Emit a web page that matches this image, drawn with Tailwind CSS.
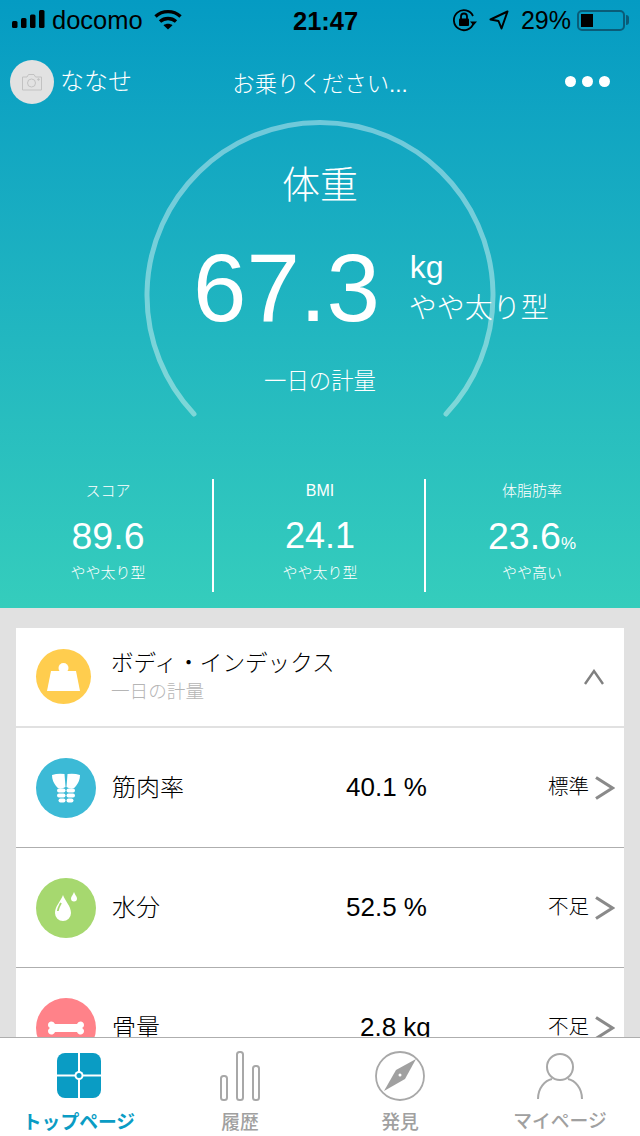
<!DOCTYPE html>
<html lang="ja">
<head>
  <meta charset="utf-8" />
  <meta name="viewport" content="width=device-width, initial-scale=1" />
  <title>体重</title>
  <script src="https://cdn.jsdelivr.net/npm/@tailwindcss/browser@4"></script>
</head>
<body class="font-['Liberation_Sans','Noto_Sans_CJK_JP',sans-serif]">
  <div class="relative w-[640px] h-[1136px] overflow-hidden bg-[#e1e1e1]">

    <!-- Hero -->
    <section class="h-[608px] bg-gradient-to-b from-[#049bc3] to-[#35cdbc] text-white">
      <!-- Status bar -->
      <div class="relative h-10 flex items-center justify-between text-black">
        <div class="flex items-center pl-3 gap-[8px]">
          <svg width="33" height="20" viewBox="0 0 33 20" fill="#000">
            <rect x="0" y="11" width="5.5" height="7" rx="1.5"/>
            <rect x="9" y="8" width="5.5" height="10" rx="1.5"/>
            <rect x="18" y="4.5" width="5.5" height="13.5" rx="1.5"/>
            <rect x="27" y="0" width="5.5" height="18" rx="1.5"/>
          </svg>
          <span class="text-[25.5px] leading-none -ml-[1px] mt-[1px]">docomo</span>
          <svg class="ml-[3px]" width="28" height="22" viewBox="0 0 28 22" fill="none" stroke="#000" stroke-width="3.4">
            <path d="M1.500 7.500C8.500 1 19.500 1 26.500 7.500"/>
            <path d="M6 12.500C10.500 8.500 17.500 8.500 22 12.500"/>
            <path d="M14 20.500L9.500 16.300C12 14.300 16 14.300 18.500 16.300Z" fill="#000" stroke="none"/>
          </svg>
        </div>
        <span class="absolute left-[293px] top-[7px] text-[25.5px] leading-[28px] font-bold">21:47</span>
        <div class="flex items-center pr-[11px]">
          <svg width="26" height="24" viewBox="0 0 26 24" fill="none" stroke="#000" stroke-width="1.800">
            <path d="M21 8A10 10 0 1 0 21.500 15"/>
            <path d="M18 13.500h7l-3.500 4z" fill="#000" stroke="none"/>
            <rect x="7" y="10.500" width="10" height="7.500" rx="1" fill="#000" stroke="none"/>
            <path d="M9 11V8.500a3 3 0 0 1 6 0V11"/>
          </svg>
          <svg class="ml-[11px]" width="20" height="22" viewBox="0 0 20 22" fill="none" stroke="#000" stroke-width="2" stroke-linejoin="round">
            <path d="M18.500 2.500L1.500 10.500L9.500 12L12.500 19.500Z"/>
          </svg>
          <span class="ml-[12px] text-[25px] leading-none">29%</span>
          <div class="ml-[6px] w-[48px] h-[21px] rounded-[5px] border-2 border-[#0a5c78] p-[2px] mr-[1px]">
            <div class="w-[12px] h-full bg-black"></div>
          </div>
          <div class="w-[3px] h-[10px] bg-[#0a5c78] rounded-r-[3px]"></div>
        </div>
      </div>

      <!-- Header -->
      <div class="relative h-[84px] pt-[20px] flex items-start justify-between pl-[10px] pr-[30px]">
        <div class="flex items-center gap-[6px]">
          <div class="w-11 h-11 rounded-full bg-[#e2e2e2] flex items-center justify-center">
            <svg width="22" height="18" viewBox="0 0 22 18" fill="none" stroke="#c2c2c2" stroke-width="1">
              <path d="M1.500 4H6L7.500 1.500H13L14.500 4H20.500V17H1.500Z"/>
              <circle cx="10.500" cy="10" r="4"/>
              <circle cx="17.500" cy="6.500" r="0.800" fill="#c2c2c2"/>
            </svg>
          </div>
          <span class="text-[24px] leading-none font-light">ななせ</span>
        </div>
        <span class="absolute left-0 right-0 top-[31px] text-center text-[22.4px] leading-[28px] font-light">お乗りください...</span>
        <div class="flex gap-[6px] mt-[16px]">
          <div class="w-[11px] h-[11px] rounded-full bg-white"></div>
          <div class="w-[11px] h-[11px] rounded-full bg-white"></div>
          <div class="w-[11px] h-[11px] rounded-full bg-white"></div>
        </div>
      </div>

      <!-- Gauge -->
      <div class="relative h-[355px]">
        <svg class="absolute left-[140px] top-[-7px]" width="360" height="310" viewBox="0 0 360 310" fill="none">
          <path d="M54 297A173 173 0 1 1 306 297" stroke="#ffffff" stroke-opacity="0.4" stroke-width="5" stroke-linecap="round"/>
        </svg>
        <div class="relative text-center pt-[38px] text-[38px] leading-[46px] font-light">体重</div>
        <div class="relative flex items-start mt-[30px] pl-[193px]">
          <span class="text-[96px] leading-[100px]">67.3</span>
          <div class="ml-[30px] mt-[12px]">
            <div class="text-[32px] leading-[34px]">kg</div>
            <div class="text-[28px] leading-[50px] font-light whitespace-nowrap -ml-[1px]">やや太り型</div>
          </div>
        </div>
        <div class="relative text-center mt-[28px] text-[22.4px] leading-[32px] font-light">一日の計量</div>
      </div>

      <!-- Stats -->
      <div class="grid grid-cols-[214px_212px_214px]">
        <div class="h-[113px] flex flex-col items-center border-r-2 border-white pl-[4px]">
          <div class="text-[15px] leading-[24px] font-light">スコア</div>
          <div class="text-[37.5px] leading-[42px] mt-[12px]">89.6</div>
          <div class="text-[15px] leading-[20px] mt-[6px] font-light">やや太り型</div>
        </div>
        <div class="h-[113px] flex flex-col items-center border-r-2 border-white pl-[2px]">
          <div class="text-[16px] leading-[24px] font-light">BMI</div>
          <div class="text-[36px] leading-[42px] mt-[12px]">24.1</div>
          <div class="text-[15px] leading-[20px] mt-[6px] font-light">やや太り型</div>
        </div>
        <div class="h-[113px] flex flex-col items-center pr-[2px]">
          <div class="text-[15px] leading-[24px] font-light">体脂肪率</div>
          <div class="text-[37.5px] leading-[42px] mt-[12px]">23.6<span class="text-[17px] leading-none">%</span></div>
          <div class="text-[15px] leading-[20px] mt-[6px] font-light">やや高い</div>
        </div>
      </div>
    </section>

    <!-- Card -->
    <section class="mx-4 mt-5 bg-white text-black">
      <div class="h-[98px] flex items-center pl-5 pr-[20px] border-b-2 border-[#e1e1e1] box-content">
        <div class="w-[55px] h-[55px] rounded-full bg-[#ffcd4e] flex items-center justify-center -mt-[1px]">
          <svg width="33" height="28" viewBox="0 0 33 28" fill="#fff">
            <circle cx="16.500" cy="5" r="5"/>
            <path d="M4 8H29L33 28H0Z"/>
          </svg>
        </div>
        <div class="ml-[20px] flex-1 mt-[1px]">
          <div class="text-[22.6px] leading-[26px] font-light">ボディ・インデックス</div>
          <div class="text-[18.6px] leading-[24px] mt-[3px] text-[#b5b5b5] font-light">一日の計量</div>
        </div>
        <svg width="20" height="16" viewBox="0 0 20 16" fill="none" stroke="#808080" stroke-width="2.400">
          <path d="M1 15L10 2L19 15"/>
        </svg>
      </div>

      <div class="h-[119px] flex items-center pl-5 border-b border-[#aeaeae] box-content">
        <div class="w-[60px] h-[60px] rounded-full bg-[#3cbad6] flex items-center justify-center">
          <svg width="30" height="30" viewBox="0 0 30 30" fill="#fff">
            <path d="M1 2Q7 0 13.500 1L14.500 14Q8 18 5 13Q1 8 1 2Z"/>
            <path d="M29 2Q23 0 16.500 1L15.500 14Q22 18 25 13Q29 8 29 2Z"/>
            <rect x="6" y="15.500" width="8.500" height="4" rx="2"/>
            <rect x="15.500" y="15.500" width="8.500" height="4" rx="2"/>
            <rect x="6" y="20.500" width="8.500" height="4" rx="2"/>
            <rect x="15.500" y="20.500" width="8.500" height="4" rx="2"/>
            <rect x="7.500" y="25.500" width="7" height="4" rx="2"/>
            <rect x="15.500" y="25.500" width="7" height="4" rx="2"/>
          </svg>
        </div>
        <span class="ml-4 w-[120px] text-[24px] font-light">筋肉率</span>
        <span class="w-[316px] pl-[114px] text-[26px] whitespace-nowrap">40.1 %</span>
        <span class="text-[20.5px] w-[47px] font-light">標準</span>
        <svg width="20" height="26" viewBox="0 0 20 26" fill="none" stroke="#8a8a8a" stroke-width="3.200">
          <path d="M1 2.500L17.500 13L1 23.500"/>
        </svg>
      </div>

      <div class="h-[119px] flex items-center pl-5 border-b border-[#aeaeae] box-content">
        <div class="w-[60px] h-[60px] rounded-full bg-[#a6d86f] flex items-center justify-center">
          <svg class="mt-[-2px]" width="24" height="30" viewBox="0 0 24 30" fill="#fff">
            <path d="M9 3C11 9 17 14 17 21A8 8 0 0 1 1 21C1 14 7 9 9 3Z"/>
            <path d="M7 11C5.500 14 4 16 3.800 19" stroke="#a6d86f" stroke-width="1.800" fill="none"/>
            <path d="M20 0C21 3 23 4.500 23 6.500A3 3 0 0 1 17 6.500C17 4.500 19 3 20 0Z"/>
          </svg>
        </div>
        <span class="ml-4 w-[120px] text-[24px] font-light">水分</span>
        <span class="w-[316px] pl-[114px] text-[26px] whitespace-nowrap">52.5 %</span>
        <span class="text-[20.5px] w-[47px] font-light">不足</span>
        <svg width="20" height="26" viewBox="0 0 20 26" fill="none" stroke="#8a8a8a" stroke-width="3.200">
          <path d="M1 2.500L17.500 13L1 23.500"/>
        </svg>
      </div>

      <div class="h-[119px] flex items-center pl-5">
        <div class="w-[60px] h-[60px] rounded-full bg-[#ff8289] flex items-center justify-center">
          <svg width="36" height="16" viewBox="0 0 36 16" fill="#fff">
            <path d="M7 4C5 0 0 1 0 5C0 6.500 1 7.500 2 8C1 8.500 0 9.500 0 11C0 15 5 16 7 12H29C31 16 36 15 36 11C36 9.500 35 8.500 34 8C35 7.500 36 6.500 36 5C36 1 31 0 29 4Z"/>
          </svg>
        </div>
        <span class="ml-4 w-[120px] text-[24px] font-light">骨量</span>
        <span class="w-[316px] pl-[128px] text-[26px] whitespace-nowrap">2.8 kg</span>
        <span class="text-[20.5px] w-[47px] font-light">不足</span>
        <svg width="20" height="26" viewBox="0 0 20 26" fill="none" stroke="#8a8a8a" stroke-width="3.200">
          <path d="M1 2.500L17.500 13L1 23.500"/>
        </svg>
      </div>
    </section>

    <!-- Tab bar -->
    <nav class="absolute left-0 right-0 bottom-0 h-[99px] bg-white border-t border-[#aeaeae] grid grid-cols-4">
      <div class="flex flex-col items-center -ml-[2px]">
        <svg class="mt-[15px]" width="44" height="45" viewBox="0 0 44 45">
          <path d="M8 0H21V21.500H0V8A8 8 0 0 1 8 0Z" fill="#0a9cc4"/>
          <path d="M23 0H36A8 8 0 0 1 44 8V21.500H23Z" fill="#0a9cc4"/>
          <path d="M0 23.500H21V45H8A8 8 0 0 1 0 37Z" fill="#0a9cc4"/>
          <path d="M23 23.500H44V37A8 8 0 0 1 36 45H23Z" fill="#0a9cc4"/>
          <circle cx="22" cy="22.500" r="4.500" fill="#fff"/>
          <circle cx="22" cy="22.500" r="2.500" fill="#0a9cc4"/>
        </svg>
        <span class="mt-[12px] text-[18.8px] leading-[26px] font-bold text-[#0a9cc4] whitespace-nowrap">トップページ</span>
      </div>
      <div class="flex flex-col items-center">
        <svg class="mt-[13px]" width="40" height="50" viewBox="0 0 40 50" fill="none" stroke="#a8a8a8" stroke-width="2">
          <rect x="1" y="25" width="6" height="24" rx="2.500"/>
          <rect x="17" y="1" width="6" height="48" rx="2.500"/>
          <rect x="33" y="15" width="6" height="34" rx="2.500"/>
        </svg>
        <span class="mt-[9px] text-[18.8px] leading-[26px] font-medium text-[#a0a0a0]">履歴</span>
      </div>
      <div class="flex flex-col items-center">
        <svg class="mt-[13px]" width="50" height="50" viewBox="0 0 50 50" fill="none">
          <circle cx="25" cy="25" r="24" stroke="#a8a8a8" stroke-width="1.800"/>
          <path d="M41 8L30 28L9 40L21 19Z" fill="#a0a0a0"/>
          <circle cx="25" cy="24" r="1.500" fill="#fff"/>
        </svg>
        <span class="mt-[9px] text-[18.8px] leading-[26px] font-medium text-[#a0a0a0]">発見</span>
      </div>
      <div class="flex flex-col items-center">
        <svg class="mt-[14px]" width="46" height="48" viewBox="0 0 46 48" fill="none" stroke="#a8a8a8" stroke-width="2">
          <circle cx="23" cy="15" r="13"/>
          <path d="M1 47C1 36 8 28.500 15 27"/>
          <path d="M45 47C45 36 38 28.500 31 27"/>
        </svg>
        <span class="mt-[9px] text-[18.8px] leading-[26px] font-medium text-[#a0a0a0] whitespace-nowrap">マイページ</span>
      </div>
    </nav>
  </div>
</body>
</html>
